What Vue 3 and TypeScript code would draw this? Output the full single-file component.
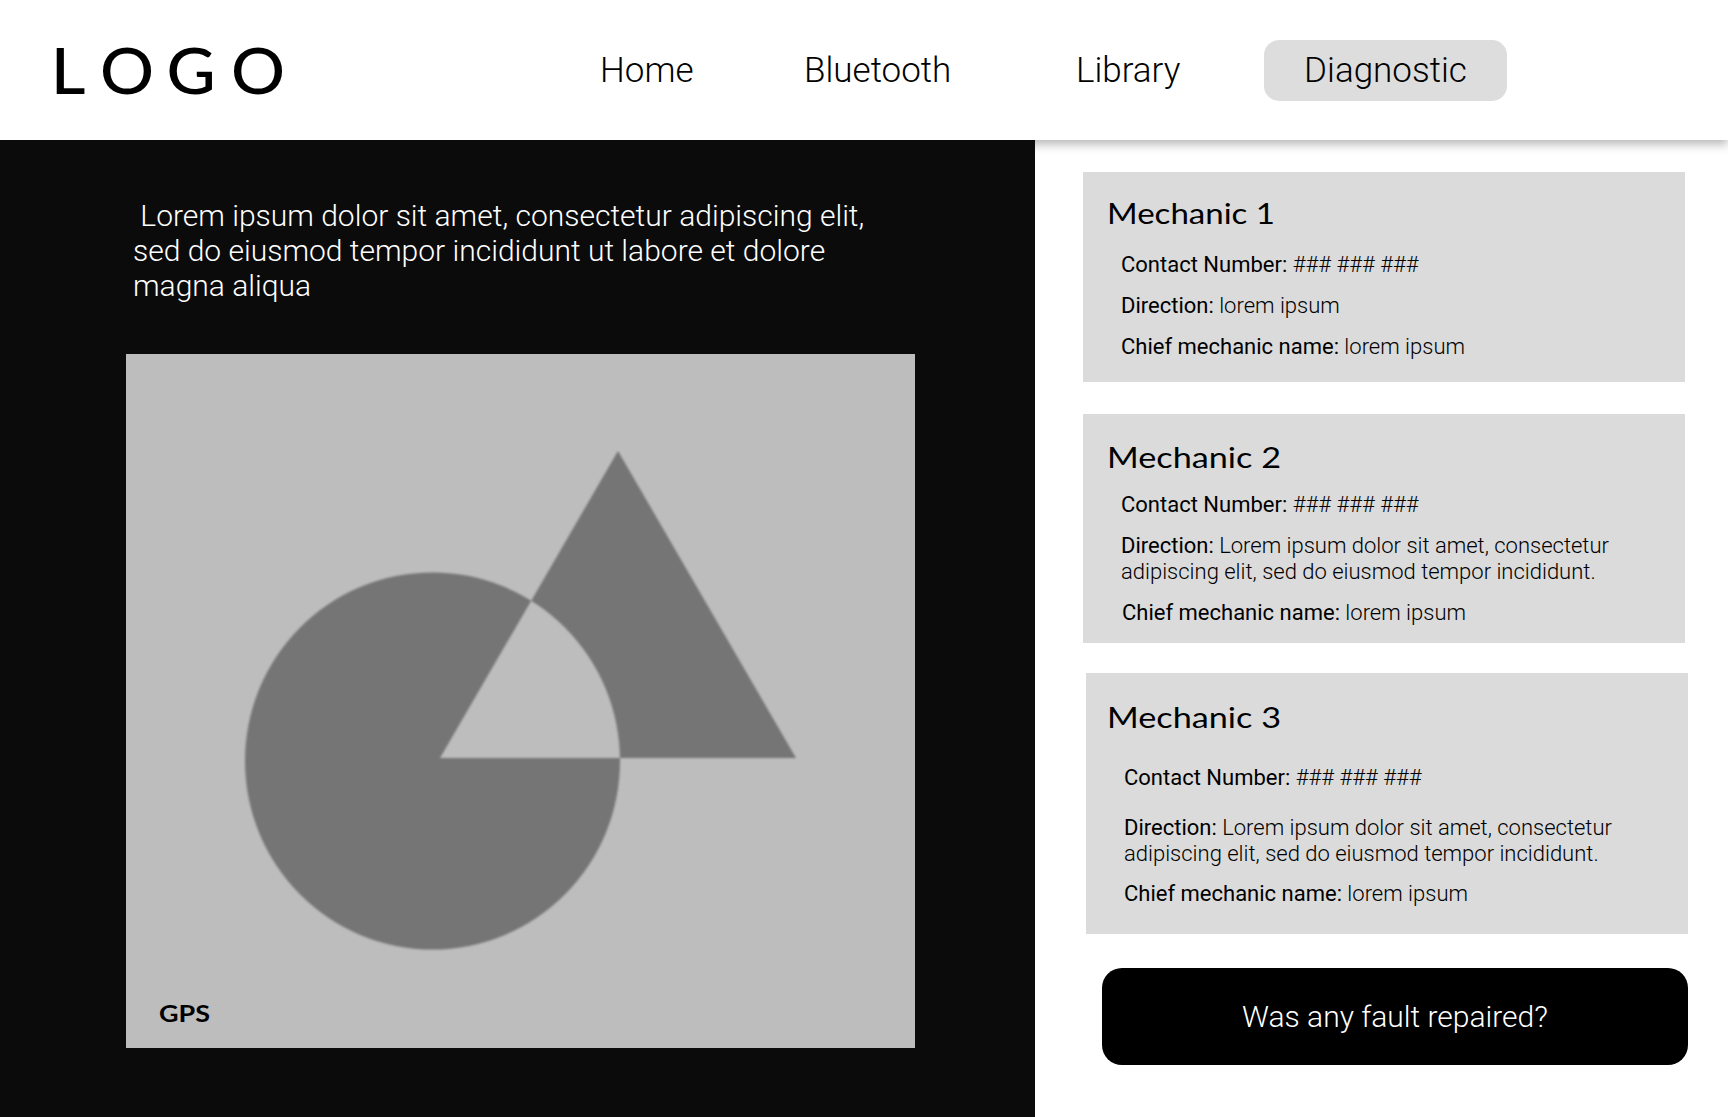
<script setup lang="ts">
interface Detail {
  label: string
  value: string
}

interface Mechanic {
  id: string
  name: string
  titleWidth: number
  details: Detail[]
}

const navItems: { id: string; label: string }[] = [
  { id: 'home', label: 'Home' },
  { id: 'bluetooth', label: 'Bluetooth' },
  { id: 'library', label: 'Library' },
  { id: 'diagnostic', label: 'Diagnostic' },
]

const longAddress =
  'Lorem ipsum dolor sit amet, consectetur adipiscing elit, sed do eiusmod tempor incididunt.'

const makeDetails = (direction: string): Detail[] => [
  { label: 'Contact Number:', value: '### ### ###' },
  { label: 'Direction:', value: direction },
  { label: 'Chief mechanic name:', value: 'lorem ipsum' },
]

const mechanics: Mechanic[] = [
  { id: 'one', name: 'Mechanic 1', titleWidth: 168, details: makeDetails('lorem ipsum') },
  { id: 'two', name: 'Mechanic 2', titleWidth: 174, details: makeDetails(longAddress) },
  { id: 'three', name: 'Mechanic 3', titleWidth: 174, details: makeDetails(longAddress) },
]
</script>

<template>
  <div class="page">
    <header class="header">
      <svg class="logo" width="240" height="60" role="img" aria-label="LOGO">
        <text x="-2.2 44 106.2 166.4" y="54" transform="scale(1.07 1)">LOGO</text>
      </svg>
      <nav class="nav">
        <a v-for="item in navItems" :key="item.id" class="nav-item" :class="item.id">{{ item.label }}</a>
      </nav>
    </header>

    <main class="content">
      <section class="map-panel">
        <p class="intro">&nbsp;Lorem ipsum dolor sit amet, consectetur adipiscing elit, sed do eiusmod tempor incididunt ut labore et dolore magna aliqua</p>
        <div class="map">
          <svg class="shapes" width="789" height="694" viewBox="126 354 789 694">
            <path
              class="shape"
              fill-rule="evenodd"
              d="M245 761a187.5 188.5 0 1 0 375 0a187.5 188.5 0 1 0 -375 0ZM618 451L796 758H440Z"
            />
            <text class="gps" x="159" y="1022" textLength="51" lengthAdjust="spacingAndGlyphs">GPS</text>
          </svg>
        </div>
      </section>

      <aside class="sidebar">
        <article v-for="m in mechanics" :key="m.id" class="card" :class="m.id">
          <h2 class="card-title">
            <svg width="200" height="36">
              <text x="0" y="28" :textLength="m.titleWidth" lengthAdjust="spacingAndGlyphs">{{ m.name }}</text>
            </svg>
          </h2>
          <p v-for="d in m.details" :key="d.label" class="detail">
            <span class="label">{{ d.label }}</span> {{ d.value }}
          </p>
        </article>
        <button class="repair" type="button">Was any fault repaired?</button>
      </aside>
    </main>
  </div>
</template>

<style>
body {
  margin: 0;
  background: #fff;
}
</style>

<style scoped>
.page {
  display: flex;
  flex-direction: column;
  width: 1728px;
  height: 1117px;
  overflow: hidden;
  background: #fff;
  color: #000;
  font-family: Roboto, "Liberation Sans", sans-serif;
  font-weight: 300;
}

.header {
  display: flex;
  box-sizing: border-box;
  flex: none;
  height: 140px;
  padding: 40px 0 0 53px;
  background: #fff;
  box-shadow: 0 4px 10px rgba(0, 0, 0, 0.3);
}

.logo {
  flex: none;
  font: 500 63px Lato, "Open Sans", sans-serif;
  overflow: visible;
}

.nav {
  display: flex;
  margin-left: 307px;
  height: 61px;
  font-size: 35px;
  line-height: 61px;
}

.home {
  width: 204px;
}

.bluetooth {
  width: 272px;
}

.library {
  width: 188px;
}

.diagnostic {
  width: 243px;
  border-radius: 15px;
  background: #ddd;
  text-align: center;
}

.content {
  display: flex;
  flex: 1;
}

.map-panel {
  position: relative;
  box-sizing: border-box;
  width: 1035px;
  padding: 58px 120px 0 126px;
  background: #0b0b0b;
}

.intro {
  width: 750px;
  height: 105px;
  margin: 0 0 51px;
  padding-left: 7px;
  color: #fff;
  font-size: 30px;
  line-height: 35px;
}

.map {
  width: 789px;
  height: 694px;
  background: #bdbdbd;
}

.shapes {
  display: block;
}

.shape {
  fill: #757575;
  filter: blur(0.8px);
}

.gps {
  font: 700 23.5px Lato, "Open Sans", sans-serif;
}

.sidebar {
  display: flex;
  flex-direction: column;
  padding: 32px 0 0 48px;
}

.card {
  box-sizing: border-box;
  width: 602px;
  background: #dbdbdb;
}

.card-title {
  height: 36px;
  margin: 0;
}

.card-title svg {
  display: block;
  font: 400 29px Lato, "Open Sans", sans-serif;
  overflow: visible;
}

.detail {
  width: 500px;
  margin: 0 0 15px 14px;
  font-size: 22px;
  line-height: 26px;
}

.label {
  font-weight: 400;
}

.one {
  height: 210px;
  margin-bottom: 32px;
  padding: 24px 0 0 24px;
}

.one .card-title {
  margin-bottom: 20px;
}

.two {
  height: 229px;
  margin-bottom: 30px;
  padding: 26px 0 0 24px;
}

.two .card-title {
  margin-bottom: 16px;
}

.two .detail:last-child {
  margin-left: 15px;
}

.three {
  height: 261px;
  margin: 0 0 34px 3px;
  padding: 27px 0 0 21px;
}

.three .card-title {
  margin-bottom: 29px;
}

.three .detail {
  margin-left: 17px;
}

.three .detail:nth-child(2) {
  margin-bottom: 24px;
}

.three .detail:nth-child(3) {
  margin-bottom: 14px;
}

.repair {
  width: 586px;
  height: 97px;
  margin-left: 19px;
  padding: 0;
  border: 0;
  border-radius: 20px;
  background: #000;
  color: #fff;
  font: 300 30px Roboto, "Liberation Sans", sans-serif;
}
</style>
